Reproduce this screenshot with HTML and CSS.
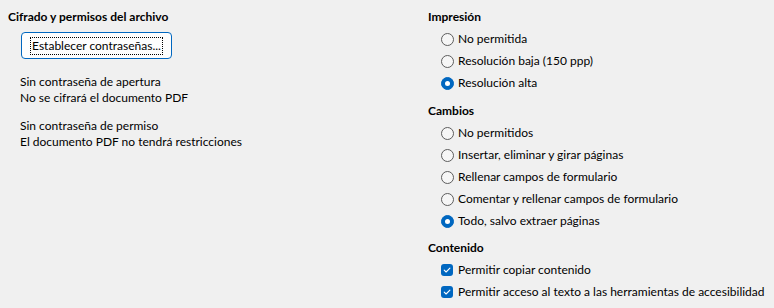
FILE: index.html
```html
<!DOCTYPE html>
<html lang="es">
<head>
<meta charset="utf-8">
<title>Cifrado y permisos</title>
<link rel="stylesheet" href="styles.css">
</head>
<body>
<div class="page">
  <section class="col-left">
    <h2 class="heading">Cifrado y permisos del archivo</h2>
    <button class="btn" type="button"><span class="focus">Establecer contraseñas...</span></button>
    <div class="info">
      <p>Sin contraseña de apertura<br>No se cifrará el documento PDF</p>
      <p>Sin contraseña de permiso<br>El documento PDF no tendrá restricciones</p>
    </div>
  </section>
  <section class="col-right">
    <h2 class="heading">Impresión</h2>
    <ul class="opts">
      <li><span class="radio"></span>No permitida</li>
      <li><span class="radio"></span>Resolución baja (150 ppp)</li>
      <li><span class="radio on"></span>Resolución alta</li>
    </ul>
    <h2 class="heading sec">Cambios</h2>
    <ul class="opts">
      <li><span class="radio"></span>No permitidos</li>
      <li><span class="radio"></span>Insertar, eliminar y girar páginas</li>
      <li><span class="radio"></span>Rellenar campos de formulario</li>
      <li><span class="radio"></span>Comentar y rellenar campos de formulario</li>
      <li><span class="radio on"></span>Todo, salvo extraer páginas</li>
    </ul>
    <h2 class="heading sec2">Contenido</h2>
    <ul class="opts">
      <li><span class="check"><svg viewBox="0 0 12 12" width="12" height="12"><path d="M3.2 6.2 L5.1 8 L8.9 4.2" fill="none" stroke="#fff" stroke-width="1.1" stroke-linecap="round" stroke-linejoin="round"/></svg></span>Permitir copiar contenido</li>
      <li><span class="check"><svg viewBox="0 0 12 12" width="12" height="12"><path d="M3.2 6.2 L5.1 8 L8.9 4.2" fill="none" stroke="#fff" stroke-width="1.1" stroke-linecap="round" stroke-linejoin="round"/></svg></span>Permitir acceso al texto a las herramientas de accesibilidad</li>
    </ul>
  </section>
</div>
</body>
</html>
```
FILE: styles.css
```css
* { box-sizing: border-box; }
html, body { margin: 0; padding: 0; }
body {
  background: #f0f0f0;
  color: #000;
  font-family: Lato, "Noto Sans", sans-serif;
  font-size: 12px;
  line-height: 16px;
  width: 774px;
  height: 308px;
  overflow: hidden;
}
.page {
  display: grid;
  grid-template-columns: 420px 1fr;
  padding: 9px 0 0 8px;
}
.heading {
  margin: 0;
  font-size: 12px;
  font-weight: bold;
  line-height: 16px;
}
.btn {
  display: flex;
  align-items: center;
  justify-content: center;
  margin: 7px 0 0 13px;
  width: 151px;
  height: 27px;
  padding: 0;
  background: #fdfdfd;
  border: 1px solid #0067c0;
  border-radius: 4px;
  font: inherit;
  color: #000;
}
.focus {
  outline: 1px dotted #000;
  padding: 0 1px;
  line-height: 16px;
}
.info { margin: 15px 0 0 12px; }
.info p { margin: 0 0 12px; }
.opts {
  list-style: none;
  margin: 3px 0 0 13px;
  padding: 0;
}
.opts li {
  display: flex;
  align-items: center;
  height: 22px;
}
.radio {
  width: 13px;
  height: 13px;
  border-radius: 50%;
  border: 1px solid #5d5d5d;
  background: #f6f6f6;
  margin-right: 4px;
  flex: none;
  position: relative;
}
.radio.on {
  background: #0067c0;
  border-color: #0067c0;
}
.radio.on::after {
  content: "";
  position: absolute;
  left: 3px;
  top: 3px;
  width: 5px;
  height: 5px;
  border-radius: 50%;
  background: #fff;
}
.check {
  width: 12px;
  height: 12px;
  border-radius: 3px;
  background: #0067c0;
  margin-right: 5px;
  flex: none;
  display: flex;
}
.sec { margin-top: 9px; }
.sec2 { margin-top: 8px; }
```
